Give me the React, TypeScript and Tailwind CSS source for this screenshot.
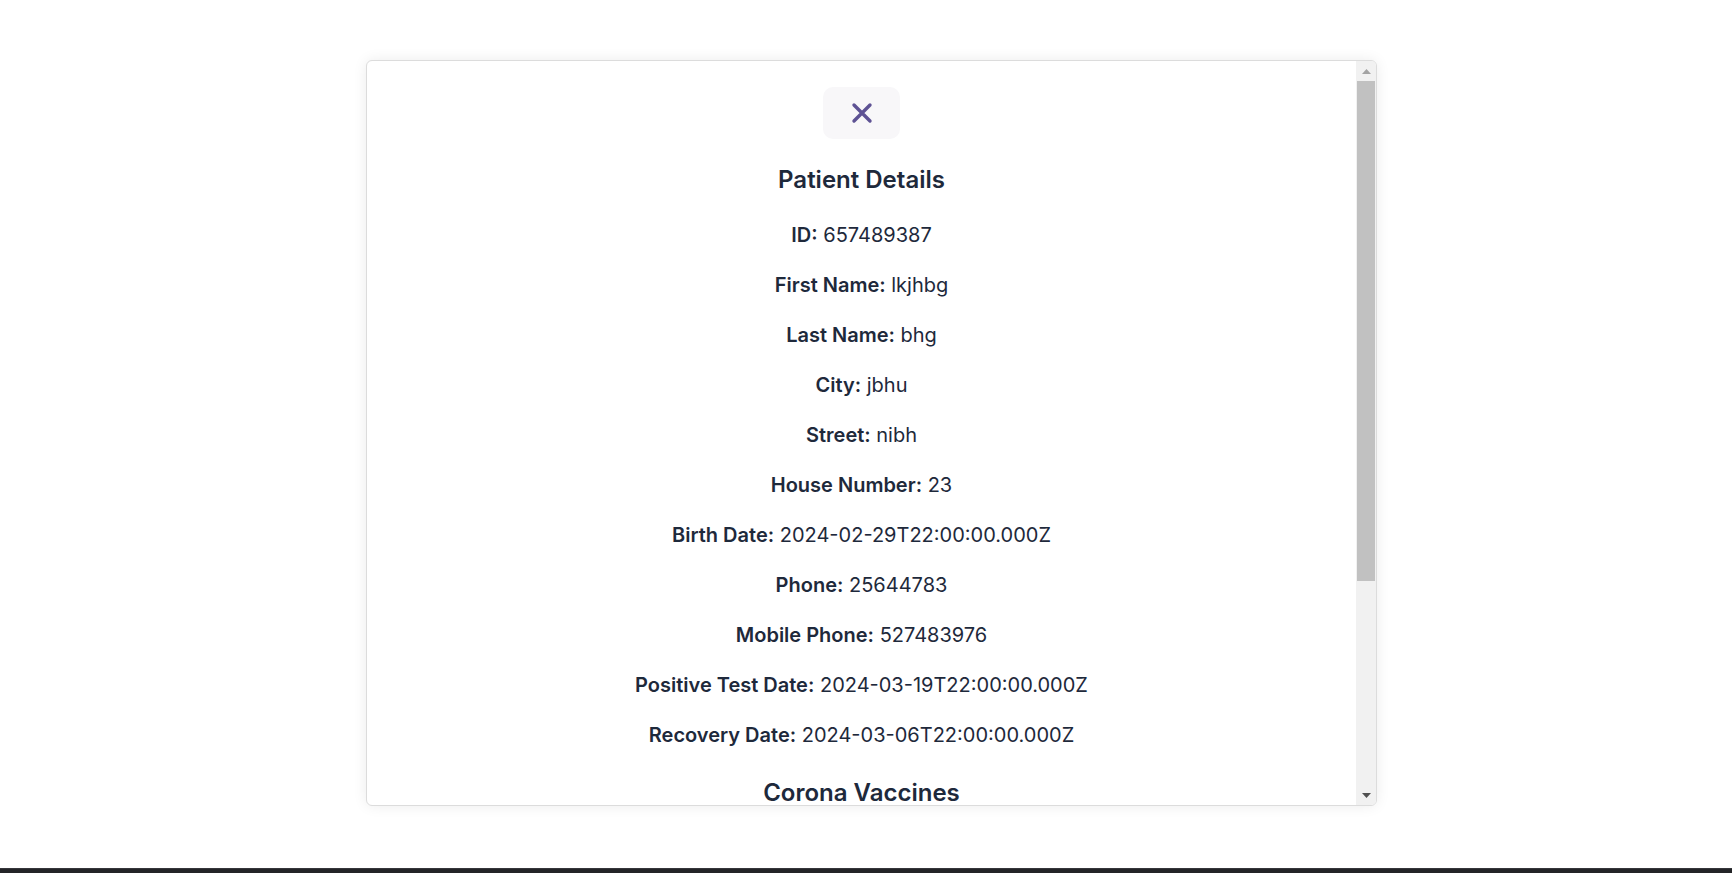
import React from "react";

const patient = [
  { label: "ID", value: "657489387" },
  { label: "First Name", value: "lkjhbg" },
  { label: "Last Name", value: "bhg" },
  { label: "City", value: "jbhu" },
  { label: "Street", value: "nibh" },
  { label: "House Number", value: "23" },
  { label: "Birth Date", value: "2024-02-29T22:00:00.000Z" },
  { label: "Phone", value: "25644783" },
  { label: "Mobile Phone", value: "527483976" },
  { label: "Positive Test Date", value: "2024-03-19T22:00:00.000Z" },
  { label: "Recovery Date", value: "2024-03-06T22:00:00.000Z" },
];

const vaccines = [
  { date: "2024-01-10T22:00:00.000Z", manufacturer: "Pfizer" },
  { date: "2024-02-12T22:00:00.000Z", manufacturer: "Moderna" },
];

function CloseIcon() {
  return (
    <svg width="22" height="22" viewBox="0 0 22 22" fill="none">
      <path
        d="M3 3 L19 19 M19 3 L3 19"
        stroke="#5e5294"
        strokeWidth="3.4"
        strokeLinecap="round"
      />
    </svg>
  );
}

// fake classic scrollbar, the screenshot shows one
function ScrollBar() {
  return (
    <div className="w-[20px] shrink-0 bg-[#f1f1f1] flex flex-col items-stretch">
      <div className="h-[20px] flex items-center justify-center">
        <svg width="9" height="5" viewBox="0 0 9 5">
          <path d="M4.5 0 L9 5 L0 5 Z" fill="#a3a3a3" />
        </svg>
      </div>
      <div className="h-[500px] mx-[1px] bg-[#c1c1c1]" />
      <div className="flex-1" />
      <div className="h-[20px] flex items-center justify-center">
        <svg width="9" height="5" viewBox="0 0 9 5">
          <path d="M0 0 L9 0 L4.5 5 Z" fill="#505050" />
        </svg>
      </div>
    </div>
  );
}

export default function App() {
  return (
    <div
      className="min-h-screen flex flex-col bg-white"
      style={{ fontFamily: "Inter, 'Noto Sans', sans-serif" }}
    >
      <div className="flex-1 pt-[60px]">
        {/* modal */}
        <div className="ml-[366px] w-[1011px] h-[746px] bg-white border border-[#dcdcdc] rounded-[6px] shadow-[0_0_14px_rgba(0,0,0,0.08)] overflow-hidden flex">
          <div className="flex-1 overflow-hidden">
            <div className="flex flex-col items-center pt-[26px] pb-10 text-[#1e293b]">
              <button className="w-[77px] h-[52px] rounded-[10px] bg-[#f8f7f9] flex items-center justify-center">
                <CloseIcon />
              </button>
              <h2 className="mt-[23px] text-[24px] leading-[36px] font-semibold">
                Patient Details
              </h2>
              <div className="mt-[22px] flex flex-col items-center gap-[20px]">
                {patient.map((row) => (
                  <p key={row.label} className="text-[20px] leading-[30px]">
                    <span className="font-semibold">{row.label}:</span>{" "}
                    <span className="font-normal">{row.value}</span>
                  </p>
                ))}
              </div>
              <h2 className="mt-[25px] text-[24px] leading-[36px] font-semibold">
                Corona Vaccines
              </h2>
              <div className="mt-[22px] flex flex-col items-center gap-[20px]">
                {vaccines.map((v, i) => (
                  <div key={i} className="flex flex-col items-center gap-[20px]">
                    <p className="text-[20px] leading-[30px]">
                      <span className="font-semibold">Vaccine Date:</span>{" "}
                      {v.date}
                    </p>
                    <p className="text-[20px] leading-[30px]">
                      <span className="font-semibold">Manufacturer:</span>{" "}
                      {v.manufacturer}
                    </p>
                  </div>
                ))}
              </div>
            </div>
          </div>
          <ScrollBar />
        </div>
      </div>
      <div className="h-[5px] bg-[#232427] border-t border-[#36373b]" />
    </div>
  );
}
